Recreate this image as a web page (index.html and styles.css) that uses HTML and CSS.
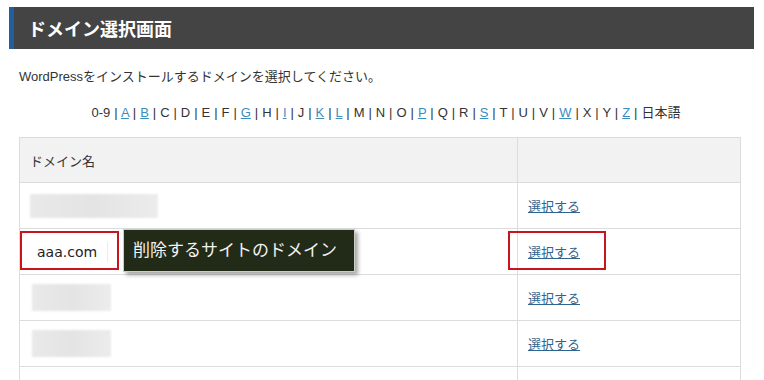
FILE: index.html
```html
<!DOCTYPE html>
<html lang="ja">
<head>
    <meta charset="UTF-8">
    <meta name="viewport" content="width=device-width, initial-scale=1.0">
    <title>ドメイン選択画面</title>
    <link rel="stylesheet" href="styles.css">
</head>
<body>
    <div class="panel">
        <h2 class="page-title">ドメイン選択画面</h2>

        <p class="intro">WordPressをインストールするドメインを選択してください。</p>

        <p class="alpha">
            0-9 | <a href="#">A</a> | <a href="#">B</a> | C | D | E | F | <a href="#">G</a> | H | <a href="#">I</a> | J | <a href="#">K</a> | <a href="#">L</a> | M | N | O | <a href="#">P</a> | Q | R | <a href="#">S</a> | T | U | V | <a href="#">W</a> | X | Y | <a href="#">Z</a> | 日本語
        </p>

        <div class="table-wrap">
            <table class="domains">
                <tr>
                    <th class="col-name">ドメイン名</th>
                    <th></th>
                </tr>
                <tr>
                    <td><span class="masked wide"></span></td>
                    <td><a href="#">選択する</a></td>
                </tr>
                <tr>
                    <td><span class="domain">aaa.com</span></td>
                    <td><a href="#">選択する</a></td>
                </tr>
                <tr>
                    <td><span class="masked"></span></td>
                    <td><a href="#">選択する</a></td>
                </tr>
                <tr>
                    <td><span class="masked"></span></td>
                    <td><a href="#">選択する</a></td>
                </tr>
                <tr>
                    <td></td>
                    <td></td>
                </tr>
            </table>

            <!-- annotations -->
            <div class="mark mark-domain"></div>
            <div class="callout">削除するサイトのドメイン</div>
            <div class="mark mark-select"></div>
        </div>
    </div>
</body>
</html>
```

FILE: styles.css
```css
body {
    margin: 0;
    padding: 7px 0 0 9px;
    background: #fff;
    color: #333;
    font-family: "Liberation Sans", Arial, "Noto Sans CJK JP", sans-serif;
    font-size: 13px;
}

.panel {
    width: 745px;
}

.page-title {
    margin: 0;
    height: 42px;
    line-height: 42px;
    padding-left: 14px;
    background: #444;
    border-left: 5px solid #1f5f9f;
    color: #fff;
    font-family: "Noto Sans CJK JP", sans-serif;
    font-size: 18px;
    font-weight: bold;
}

.intro {
    margin: 18px 0 0 10px;
    line-height: 20px;
}

.alpha {
    margin: 16px 0 0 10px;
    padding-left: 12px;
    width: 710px;
    text-align: center;
    line-height: 20px;
    word-spacing: 0.35px;
}

.alpha a {
    color: #3b8dc0;
}

.table-wrap {
    position: relative;
    margin: 14px 0 0 10px;
    width: 722px;
}

.domains {
    width: 722px;
    border-collapse: collapse;
    font-family: "Noto Sans CJK JP", sans-serif;
    font-size: 13px;
}

.domains th,
.domains td {
    border: 1px solid #dcdcdc;
    padding: 0 10px;
    text-align: left;
    vertical-align: middle;
    height: 45px;
}

.domains th {
    background: #f2f2f2;
    font-weight: normal;
    height: 44px;
}

.col-name {
    width: 477px;
}

.domains td a {
    color: #2d6592;
}

.masked {
    display: inline-block;
    width: 79px;
    height: 27px;
    margin-left: 2px;
    background: linear-gradient(to right, #e9e9e9, #e4e4e4 50%, #ececec);
    filter: blur(1px);
    vertical-align: middle;
}

.masked.wide {
    width: 128px;
    height: 24px;
    margin-left: 0;
}

.domain {
    display: inline-block;
    padding: 0 10px 0 8px;
    margin-left: -1px;
    border-right: 1px solid #ececec;
    font-family: "DejaVu Sans", sans-serif;
    font-size: 14px;
    line-height: 20px;
    color: #222;
}

.mark {
    position: absolute;
    top: 94px;
    height: 39px;
    box-sizing: border-box;
    border: 2px solid #c8141c;
}

.mark-domain {
    left: 1px;
    width: 99px;
}

.mark-select {
    left: 489px;
    width: 98px;
}

.callout {
    position: absolute;
    left: 104px;
    top: 92px;
    width: 232px;
    height: 43px;
    box-sizing: border-box;
    padding-left: 9px;
    background: #222b17;
    border: 1px solid #c9cdc4;
    box-shadow: 3px 3px 4px rgba(0, 0, 0, 0.35);
    color: #f2f2f2;
    font-family: "Noto Sans CJK JP", sans-serif;
    font-size: 17px;
    line-height: 38px;
}
```
